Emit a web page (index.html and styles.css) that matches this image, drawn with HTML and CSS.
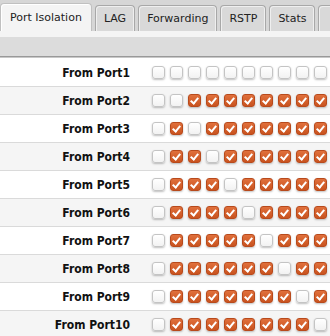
FILE: index.html
```html
<!DOCTYPE html>
<html lang="en">
<head>
    <meta charset="UTF-8">
    <title>Port Isolation</title>
    <link rel="stylesheet" href="styles.css">
</head>
<body>
    <!-- Onglets -->
    <div class="tabs">
        <div class="tab active">Port Isolation</div>
        <div class="tab">LAG</div>
        <div class="tab">Forwarding</div>
        <div class="tab">RSTP</div>
        <div class="tab">Stats</div>
        <div class="tab tab-more"></div>
    </div>
    <div class="tab-strip"></div>
    <div class="toolbar"></div>

    <!-- Matrice d'isolation -->
    <div id="matrix" class="matrix"></div>

    <script>
        (function() {
            'use strict';
            var matrix = document.getElementById('matrix');
            for (var i = 1; i <= 10; i++) {
                var row = document.createElement('div');
                row.className = 'matrix-row' + (i % 2 === 0 ? ' odd' : '');
                var label = document.createElement('div');
                label.className = 'row-label';
                label.textContent = 'From Port' + i;
                row.appendChild(label);
                var boxes = document.createElement('div');
                boxes.className = 'row-boxes';
                for (var j = 1; j <= 10; j++) {
                    var box = document.createElement('span');
                    var checked = i > 1 && j > 1 && j !== i;
                    box.className = 'check' + (checked ? ' on' : '');
                    boxes.appendChild(box);
                }
                row.appendChild(boxes);
                matrix.appendChild(row);
            }
        })();
    </script>
</body>
</html>
```

FILE: styles.css
```css
/* Page */
body {
    margin: 0;
    background: #fff;
    font-family: "DejaVu Sans", sans-serif;
    color: #111;
    overflow: hidden;
}

/* Onglets */
.tabs {
    display: flex;
    align-items: flex-end;
    gap: 3px;
    height: 31px;
    background: #d6d6d6;
    white-space: nowrap;
}

.tab {
    flex-shrink: 0;
    height: 25px;
    line-height: 25px;
    padding: 0 8px;
    font-size: 11px;
    color: #222;
    background: #d9d9d9;
    border: 1px solid #a8a8a8;
    border-bottom: none;
    border-radius: 4px 4px 0 0;
    box-shadow: inset 1px 1px 0 #efefef, inset -1px 0 0 #efefef;
}

.tab.active {
    height: 27px;
    line-height: 28px;
    padding: 0 9px;
    background: #f4f4f4;
    border-color: #c0c0c0;
    box-shadow: inset 1px 1px 0 #fff;
}

.tab-more {
    width: 30px;
}

.tab-strip {
    height: 6px;
    background: #f4f4f4;
}

.toolbar {
    height: 19px;
    background: #dcdcdc;
    border-bottom: 1px solid #999;
    box-shadow: 0 1px 0 #c8c8c8;
}

/* Matrice */
.matrix {
    margin-top: 2px;
}

.matrix-row {
    display: flex;
    align-items: center;
    height: 27px;
    border-bottom: 1px solid #dadada;
    background: #fff;
}

.matrix-row.odd {
    background: #f5f5f5;
}

.row-label {
    width: 130px;
    flex-shrink: 0;
    padding-right: 22px;
    text-align: right;
    font-family: "DejaVu Sans Condensed", "DejaVu Sans", sans-serif;
    font-size: 12px;
    font-weight: bold;
}

.row-boxes {
    display: flex;
    gap: 5px;
}

.check {
    flex-shrink: 0;
    width: 11px;
    height: 11px;
    border: 1px solid #c4c4c4;
    border-radius: 3px;
    background: linear-gradient(#fff, #f2f2f2);
    box-shadow: 0 1px 2px rgba(0,0,0,0.25);
    position: relative;
}

.check.on {
    border-color: #b84a1c;
    background: linear-gradient(#e0703c, #c9531f);
}

.check.on::after {
    content: "";
    position: absolute;
    left: 3px;
    top: 1px;
    width: 3px;
    height: 6px;
    border: solid #fff;
    border-width: 0 2px 2px 0;
    transform: rotate(40deg);
}
```
